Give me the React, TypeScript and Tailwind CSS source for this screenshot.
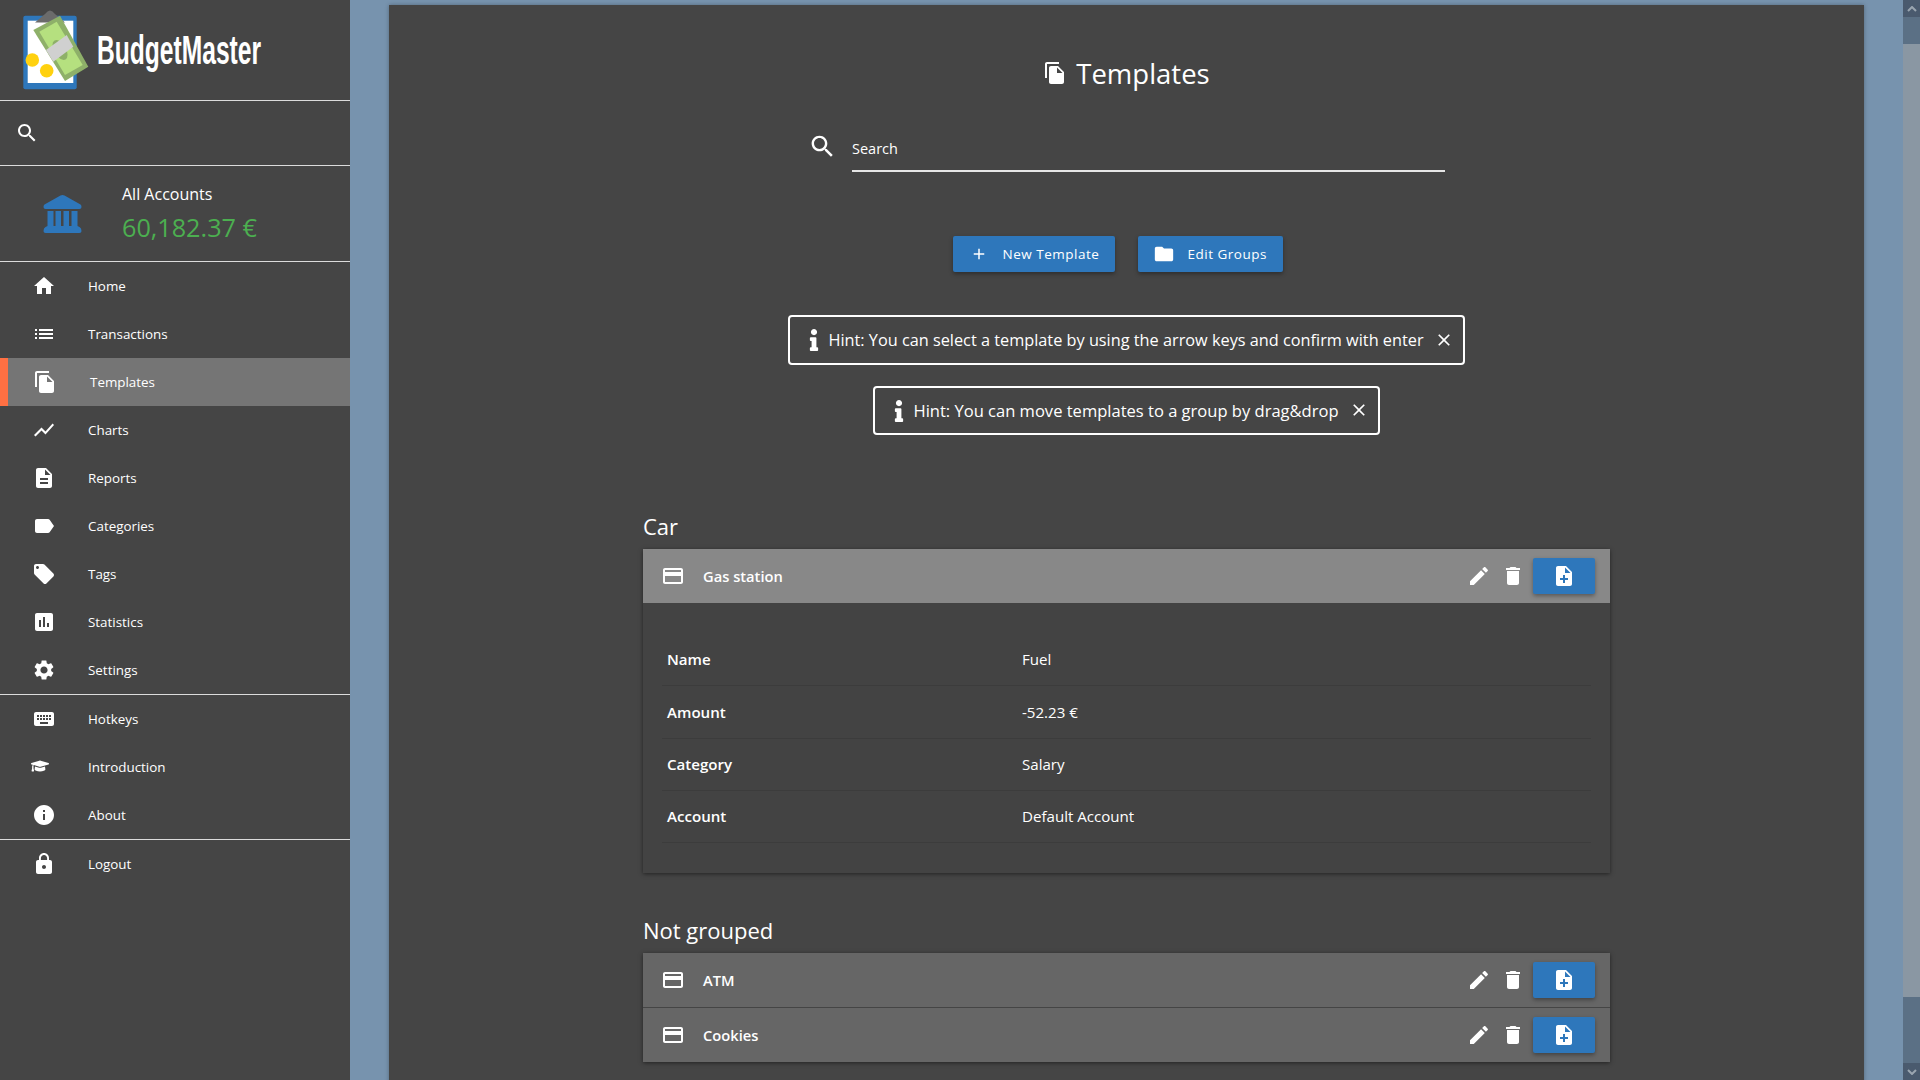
import React from "react";
import { FaGraduationCap, FaInfo } from "react-icons/fa";

const P = {
  search: "M15.5 14h-.79l-.28-.27C15.41 12.59 16 11.11 16 9.5 16 5.91 13.09 3 9.5 3S3 5.91 3 9.5 5.91 16 9.5 16c1.61 0 3.09-.59 4.23-1.57l.27.28v.79l5 4.99L20.49 19l-4.99-5zm-6 0C7.01 14 5 11.99 5 9.5S7.01 5 9.5 5 14 7.01 14 9.5 11.99 14 9.5 14z",
  home: "M10 20v-6h4v6h5v-8h3L12 3 2 12h3v8z",
  list: "M3 13h2v-2H3v2zm0 4h2v-2H3v2zm0-8h2V7H3v2zm4 4h14v-2H7v2zm0 4h14v-2H7v2zM7 7v2h14V7H7z",
  copy: "M16 1H4c-1.1 0-2 .9-2 2v14h2V3h12V1zm-1 4l6 6v10c0 1.1-.9 2-2 2H7.99C6.89 23 6 22.1 6 21l.01-14c0-1.1.89-2 1.99-2h7zm-1 7h5.5L14 6.5V12z",
  chart: "M3.5 18.49l6-6.01 4 4L22 6.92l-1.41-1.41-7.09 7.97-4-4L2 16.99z",
  desc: "M14 2H6c-1.1 0-1.99.9-1.99 2L4 20c0 1.1.89 2 1.99 2H18c1.1 0 2-.9 2-2V8l-6-6zm2 16H8v-2h8v2zm0-4H8v-2h8v2zm-3-5V3.5L18.5 9H13z",
  label: "M17.63 5.84C17.27 5.33 16.67 5 16 5L5 5.01C3.9 5.01 3 5.9 3 7v10c0 1.1.9 1.99 2 1.99L16 19c.67 0 1.27-.33 1.63-.84L22 12l-4.37-6.16z",
  offer: "M21.41 11.58l-9-9C12.05 2.22 11.55 2 11 2H4c-1.1 0-2 .9-2 2v7c0 .55.22 1.05.59 1.42l9 9c.36.36.86.58 1.41.58.55 0 1.05-.22 1.41-.59l7-7c.37-.36.59-.86.59-1.41 0-.55-.23-1.06-.59-1.42zM5.5 7C4.67 7 4 6.33 4 5.5S4.67 4 5.5 4 7 4.67 7 5.5 6.33 7 5.5 7z",
  stats: "M19 3H5c-1.1 0-2 .9-2 2v14c0 1.1.9 2 2 2h14c1.1 0 2-.9 2-2V5c0-1.1-.9-2-2-2zM9 17H7v-7h2v7zm4 0h-2V7h2v10zm4 0h-2v-4h2v4z",
  settings: "M19.14 12.94c.04-.3.06-.61.06-.94 0-.32-.02-.64-.07-.94l2.03-1.58c.18-.14.23-.41.12-.61l-1.92-3.32c-.12-.22-.37-.29-.59-.22l-2.39.96c-.5-.38-1.03-.7-1.62-.94l-.36-2.54c-.04-.24-.24-.41-.48-.41h-3.84c-.24 0-.43.17-.47.41l-.36 2.54c-.59.24-1.13.57-1.62.94l-2.39-.96c-.22-.08-.47 0-.59.22L2.74 8.87c-.12.21-.08.47.12.61l2.03 1.58c-.05.3-.09.63-.09.94s.02.64.07.94l-2.03 1.58c-.18.14-.23.41-.12.61l1.92 3.32c.12.22.37.29.59.22l2.39-.96c.5.38 1.03.7 1.62.94l.36 2.54c.05.24.24.41.48.41h3.84c.24 0 .44-.17.47-.41l.36-2.54c.59-.24 1.13-.56 1.62-.94l2.39.96c.22.08.47 0 .59-.22l1.92-3.32c.12-.22.07-.47-.12-.61l-2.01-1.58zM12 15.6c-1.98 0-3.6-1.62-3.6-3.6s1.62-3.6 3.6-3.6 3.6 1.62 3.6 3.6-1.62 3.6-3.6 3.6z",
  keyboard: "M20 5H4c-1.1 0-1.99.9-1.99 2L2 17c0 1.1.9 2 2 2h16c1.1 0 2-.9 2-2V7c0-1.1-.9-2-2-2zm-9 3h2v2h-2V8zm0 3h2v2h-2v-2zM8 8h2v2H8V8zm0 3h2v2H8v-2zm-1 2H5v-2h2v2zm0-3H5V8h2v2zm9 7H8v-2h8v2zm0-4h-2v-2h2v2zm0-3h-2V8h2v2zm3 3h-2v-2h2v2zm0-3h-2V8h2v2z",
  info: "M12 2C6.48 2 2 6.48 2 12s4.48 10 10 10 10-4.48 10-10S17.52 2 12 2zm1 15h-2v-6h2v6zm0-8h-2V7h2v2z",
  lock: "M18 8h-1V6c0-2.76-2.24-5-5-5S7 3.24 7 6v2H6c-1.1 0-2 .9-2 2v10c0 1.1.9 2 2 2h12c1.1 0 2-.9 2-2V10c0-1.1-.9-2-2-2zm-6 9c-1.1 0-2-.9-2-2s.9-2 2-2 2 .9 2 2-.9 2-2 2zm3.1-9H8.9V6c0-1.71 1.39-3.1 3.1-3.1 1.71 0 3.1 1.39 3.1 3.1v2z",
  card: "M20 4H4c-1.11 0-1.99.89-1.99 2L2 18c0 1.11.89 2 2 2h16c1.11 0 2-.89 2-2V6c0-1.11-.89-2-2-2zm0 14H4v-6h16v6zm0-10H4V6h16v2z",
  edit: "M3 17.25V21h3.75L17.81 9.94l-3.75-3.75L3 17.25zM20.71 7.04c.39-.39.39-1.02 0-1.41l-2.34-2.34c-.39-.39-1.02-.39-1.41 0l-1.83 1.83 3.75 3.75 1.83-1.83z",
  del: "M6 19c0 1.1.9 2 2 2h8c1.1 0 2-.9 2-2V7H6v12zM19 4h-3.5l-1-1h-5l-1 1H5v2h14V4z",
  noteAdd: "M14 2H6c-1.1 0-1.99.9-1.99 2L4 20c0 1.1.89 2 1.99 2H18c1.1 0 2-.9 2-2V8l-6-6zm2 14h-3v3h-2v-3H8v-2h3v-3h2v3h3v2zm-3-7V3.5L18.5 9H13z",
  add: "M19 13h-6v6h-2v-6H5v-2h6V5h2v6h6v2z",
  folder: "M10 4H4c-1.1 0-1.99.9-1.99 2L2 18c0 1.1.9 2 2 2h16c1.1 0 2-.9 2-2V8c0-1.1-.9-2-2-2h-8l-2-2z",
  close: "M19 6.41L17.59 5 12 10.59 6.41 5 5 6.41 10.59 12 5 17.59 6.41 19 12 13.41 17.59 19 19 17.59 13.41 12z",
};

function Icon({ d, className }: { d: string; className: string }) {
  return (
    <svg viewBox="0 0 24 24" fill="currentColor" className={className}>
      <path d={d} />
    </svg>
  );
}

function Logo() {
  return (
    <svg viewBox="20 5 72 90" className="w-[72px] h-[90px] shrink-0">
      <rect x="23.3" y="15.7" width="53.4" height="73.5" rx="2" fill="#2e77bb" />
      <rect x="27.7" y="20.7" width="45.6" height="62.3" fill="#ffffff" />
      <path d="M35 22.5 L45 14 Q50 7 55 14 L65 22.5 Z" fill="#6b6b6b" />
      <path d="M33.3 30 L60 15.7 L88.3 66.7 L65 81 Z" fill="#8eb069" />
      <path d="M39.3 31.7 L56.7 21.7 L82.7 65 L65 75 Z" fill="#b5e07f" />
      <ellipse cx="60" cy="50" rx="6" ry="11" transform="rotate(-30 60 50)" fill="#8eb069" />
      <path d="M46 50 L66.7 35 L73.3 46.7 L53.3 61.7 Z" fill="#d0d0d0" />
      <circle cx="32.3" cy="60" r="6.8" fill="#ffd10f" />
      <circle cx="46.7" cy="70.7" r="6.8" fill="#ffd10f" />
    </svg>
  );
}

function Divider() {
  return <div className="h-px bg-[#dcdcdc]" />;
}

function NavItem({ icon, label, active, custom }: { icon?: string; label: string; active?: boolean; custom?: React.ReactNode }) {
  return (
    <div className={active ? "h-12 flex items-center bg-[#757575] border-l-8 border-[#ff7043]" : "h-12 flex items-center"}>
      <div className={active ? "w-[82px] pl-[25px] shrink-0 flex" : "w-[88px] pl-[32px] shrink-0 flex"}>
        {custom ?? <Icon d={icon as string} className="w-6 h-6" />}
      </div>
      <span className="text-[13.4px] font-medium text-white mt-px">{label}</span>
    </div>
  );
}

function Hint({ text, box, size }: { text: string; box: string; size: string }) {
  return (
    <div className={`${box} inline-flex items-center border-2 border-white rounded-[4px] pl-[17px] pr-[9px]`}>
      <FaInfo className="w-[14px] h-[22px] text-white mr-[7px] shrink-0" />
      <span className={`${size} text-white whitespace-nowrap mt-px`}>{text}</span>
      <Icon d={P.close} className="w-[20px] h-[20px] text-white ml-[10px] -mt-[1px]" />
    </div>
  );
}

function TemplateRow({ name, bg }: { name: string; bg: string }) {
  return (
    <div className={`h-[54px] flex items-center ${bg} pl-[18px] pr-[15px]`}>
      <Icon d={P.card} className="w-6 h-6 text-white shrink-0" />
      <span className="ml-[18px] text-[14.7px] font-semibold text-white">{name}</span>
      <div className="ml-auto flex items-center">
        <Icon d={P.edit} className="w-6 h-6 text-white" />
        <Icon d={P.del} className="w-6 h-6 text-white ml-[10px]" />
        <div className="ml-[8px] w-[62px] h-9 rounded-[2px] bg-[#2e77bb] flex items-center justify-center shadow-[0_2px_4px_rgba(0,0,0,0.35)]">
          <Icon d={P.noteAdd} className="w-6 h-6 text-white" />
        </div>
      </div>
    </div>
  );
}

function Detail({ k, v }: { k: string; v: string }) {
  return (
    <div className="h-[52.3px] flex items-center border-b border-[#3c3c3c] text-[15.1px] text-white">
      <span className="w-[360px] pl-[5px] font-semibold">{k}</span>
      <span>{v}</span>
    </div>
  );
}

function Chevron({ up }: { up?: boolean }) {
  return (
    <div className="h-[17px] bg-[#4a5a6e] flex items-center justify-center shrink-0">
      <svg viewBox="0 0 10 6" className="w-[10px] h-[6px]">
        <path d={up ? "M1 5 L5 1 L9 5" : "M1 1 L5 5 L9 1"} fill="none" stroke="#9aa5b0" strokeWidth="2" />
      </svg>
    </div>
  );
}

export default function App() {
  return (
    <div className="h-screen w-full flex overflow-hidden bg-[#7793ae] text-white font-['Open_Sans','Noto_Sans',sans-serif]">
      <aside className="w-[350px] shrink-0 bg-[#454545] flex flex-col">
        <div className="h-[100px] flex items-center pl-[20px]">
          <Logo />
          <span className="ml-[5px] font-['Liberation_Sans',sans-serif] font-bold text-[40px] whitespace-nowrap scale-x-[0.615] origin-left text-white">BudgetMaster</span>
        </div>
        <Divider />
        <div className="h-[64px] flex items-center pl-[15px]">
          <Icon d={P.search} className="w-6 h-6" />
        </div>
        <Divider />
        <div className="h-[95px] flex items-center pl-[43px]">
          <svg viewBox="0 0 38 38" className="w-[39px] h-[38px] shrink-0" fill="#2e77bb">
            <path d="M19 0 Q20 0 21 0.6 L37 9.5 Q38 10.2 38 12 Q38 14 36 14 L2 14 Q0 14 0 12 Q0 10.2 1 9.5 L17 0.6 Q18 0 19 0 Z" />
            <rect x="4" y="16" width="6" height="15" />
            <rect x="12" y="16" width="5.5" height="15" />
            <rect x="20" y="16" width="5.5" height="15" />
            <rect x="28" y="16" width="6" height="15" />
            <path d="M4 31 L34 31 L36 32 Q38 33 38 36 Q38 38 36 38 L2 38 Q0 38 0 36 Q0 33 2 32 Z" />
          </svg>
          <div className="ml-[40px] flex flex-col -mt-[1px]">
            <span className="text-[16px] leading-[24px]">All Accounts</span>
            <span className="text-[25.2px] leading-[34px] text-[#4caf50] mt-[4px]">60,182.37 €</span>
          </div>
        </div>
        <Divider />
        <NavItem icon={P.home} label="Home" />
        <NavItem icon={P.list} label="Transactions" />
        <NavItem icon={P.copy} label="Templates" active />
        <NavItem icon={P.chart} label="Charts" />
        <NavItem icon={P.desc} label="Reports" />
        <NavItem icon={P.label} label="Categories" />
        <NavItem icon={P.offer} label="Tags" />
        <NavItem icon={P.stats} label="Statistics" />
        <NavItem icon={P.settings} label="Settings" />
        <Divider />
        <NavItem icon={P.keyboard} label="Hotkeys" />
        <NavItem label="Introduction" custom={<FaGraduationCap className="w-[18px] h-[18px] -ml-[1px] -mt-[3px]" />} />
        <NavItem icon={P.info} label="About" />
        <Divider />
        <NavItem icon={P.lock} label="Logout" />
      </aside>

      <main className="flex-1 pl-[39px] pr-[39px] pt-[5px] overflow-hidden">
        <section className="w-[1475px] min-h-[1200px] bg-[#454545] shadow-[0_0_4px_rgba(0,0,0,0.3)] pt-[51px] flex flex-col items-center">
          <div className="h-9 flex items-center">
            <Icon d={P.copy} className="w-6 h-6 mr-[9px] -mt-[2px]" />
            <h1 className="text-[27.5px] leading-9 font-normal">Templates</h1>
          </div>
          <div className="mt-[38px] h-[42px] w-[635px] ml-[2px] flex">
            <Icon d={P.search} className="w-[29px] h-[29px] -ml-[2px] mt-[2px] shrink-0" />
            <div className="ml-[15px] flex-1 border-b-2 border-[#e6e6e6] flex items-center text-[14.5px] pb-[3px]">Search</div>
          </div>
          <div className="mt-[64px] flex gap-[23px] mr-[18px]">
            <div className="h-9 w-[162px] rounded-[2px] bg-[#2e77bb] flex items-center pl-[17px] shadow-[0_2px_4px_rgba(0,0,0,0.35)]">
              <Icon d={P.add} className="w-[18px] h-[18px] shrink-0" />
              <span className="ml-[15px] text-[13.5px] font-medium tracking-[0.5px] whitespace-nowrap mt-px">New Template</span>
            </div>
            <div className="h-9 w-[145px] rounded-[2px] bg-[#2e77bb] flex items-center pl-[15px] shadow-[0_2px_4px_rgba(0,0,0,0.35)]">
              <Icon d={P.folder} className="w-[22px] h-[22px] shrink-0" />
              <span className="ml-[13px] text-[13.5px] font-medium tracking-[0.5px] whitespace-nowrap mt-px">Edit Groups</span>
            </div>
          </div>
          <div className="mt-[43px] flex">
            <Hint box="h-[50px]" size="text-[16.3px]" text="Hint: You can select a template by using the arrow keys and confirm with enter" />
          </div>
          <div className="mt-[21px] flex">
            <Hint box="h-[49px]" size="text-[16.55px]" text="Hint: You can move templates to a group by drag&drop" />
          </div>
          <div className="w-[967px] mt-[76px]">
            <h2 className="h-[30px] flex items-center text-[22px] font-normal">Car</h2>
            <div className="mt-[8px] shadow-[0_1px_4px_rgba(0,0,0,0.5)]">
              <TemplateRow name="Gas station" bg="bg-[#888888]" />
              <div className="bg-[#434343] px-[19px] pt-[31px] pb-[30px]">
                <Detail k="Name" v="Fuel" />
                <Detail k="Amount" v="-52.23 €" />
                <Detail k="Category" v="Salary" />
                <Detail k="Account" v="Default Account" />
              </div>
            </div>
            <h2 className="mt-[42px] h-[30px] flex items-center text-[22px] font-normal">Not grouped</h2>
            <div className="mt-[8px] shadow-[0_1px_4px_rgba(0,0,0,0.5)]">
              <TemplateRow name="ATM" bg="bg-[#666666]" />
              <div className="h-px bg-[#454545]" />
              <TemplateRow name="Cookies" bg="bg-[#666666]" />
            </div>
          </div>
        </section>
      </main>

      <div className="w-[17px] shrink-0 flex flex-col bg-[#5b7085]">
        <Chevron up />
        <div className="h-[27px] shrink-0" />
        <div className="h-[953px] shrink-0 bg-[#8a97a3]" />
        <div className="flex-1" />
        <Chevron />
      </div>
    </div>
  );
}
